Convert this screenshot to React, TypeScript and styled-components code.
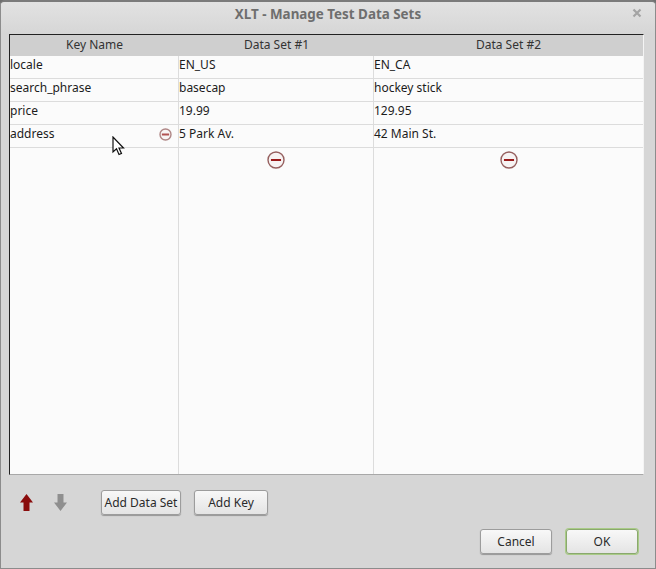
import React from 'react'
import styled, { createGlobalStyle } from 'styled-components'

const GlobalStyle = createGlobalStyle`
  html, body {
    margin: 0;
    padding: 0;
    background: #6f6f6f;
  }
  body {
    font-family: "Noto Sans", "Open Sans", sans-serif;
    font-size: 12px;
  }
`

const Window = styled.div`
  width: 656px;
  height: 569px;
  box-sizing: border-box;
  display: flex;
  flex-direction: column;
  background: #d6d6d6;
  border: 1px solid #8c8c8c;
  border-top: 2px solid #7b7b7b;
  border-radius: 5px 5px 0 0;
  position: relative;
  overflow: hidden;
`

const TitleBar = styled.div`
  height: 32px;
  flex: none;
  position: relative;
  display: flex;
  justify-content: center;
  box-sizing: border-box;
  padding-top: 3px;
  background: linear-gradient(#e2e2e2, #d6d6d6);
`

const Title = styled.div`
  font-size: 13.4px;
  line-height: 19px;
  font-weight: 700;
  color: #6e6e6e;
`

const CloseButton = styled.svg`
  position: absolute;
  right: 13px;
  top: 6px;
`

const Table = styled.div`
  margin: 0 11px 0 8px;
  height: 441px;
  flex: none;
  box-sizing: border-box;
  border-top: 1px solid #222;
  border-left: 1px solid #222;
  border-right: 1px solid #f4f4f4;
  border-bottom: 1px solid #a8a8a8;
  display: grid;
  grid-template-columns: 169px 195px 1fr;
  grid-template-rows: 21px repeat(4, 23px) 1fr;
  background: #fbfbfb;
  color: #222;
`

const HeaderCell = styled.div`
  background: #cfcfcf;
  display: flex;
  align-items: center;
  justify-content: center;
  padding-bottom: 3px;
  color: #333;
`

const Cell = styled.div<{ $last?: boolean }>`
  box-sizing: border-box;
  border-bottom: 1px solid #dcdcdc;
  border-right: ${({ $last }) => ($last ? 'none' : '1px solid #dcdcdc')};
  display: flex;
  align-items: center;
  justify-content: space-between;
  padding: 0 6px 6px 0;
  color: #1c1c1c;
  white-space: nowrap;
`

const ActionCell = styled.div<{ $last?: boolean }>`
  box-sizing: border-box;
  border-right: ${({ $last }) => ($last ? 'none' : '1px solid #dcdcdc')};
  display: flex;
  justify-content: center;
  padding-top: 3px;
`

const Toolbar = styled.div`
  flex: none;
  display: flex;
  align-items: center;
  padding: 15px 0 0 18px;
`

const ArrowSlot = styled.svg<{ $gap: number }>`
  margin-right: ${({ $gap }) => $gap}px;
`

const Button = styled.button<{ $width: number; $focused?: boolean }>`
  width: ${({ $width }) => $width}px;
  height: 25px;
  box-sizing: border-box;
  padding: 0;
  font: inherit;
  color: #2a2a2a;
  background: linear-gradient(#f8f8f8, #e4e4e4);
  border: 1px solid ${({ $focused }) => ($focused ? '#8aa86e' : '#9c9c9c')};
  border-radius: 3px;
  box-shadow: ${({ $focused }) =>
    $focused ? '0 0 0 1px #a9cb87' : '0 1px 1px rgba(0, 0, 0, 0.3)'};
`

const Footer = styled.div`
  flex: none;
  display: flex;
  justify-content: flex-end;
  gap: 14px;
  padding: 14px 17px 0 0;
`

const ToolbarButtons = styled.div`
  display: flex;
  gap: 13px;
`

const Pointer = styled.svg`
  position: absolute;
  left: 111px;
  top: 134px;
`

const RemoveSvg = styled.svg<{ $faded?: boolean }>`
  opacity: ${({ $faded }) => ($faded ? 0.75 : 1)};
  margin-top: ${({ $faded }) => ($faded ? '2px' : '0')};
`

function RemoveIcon({ size, faded }: { size: number; faded?: boolean }) {
  const c = size / 2
  return (
    <RemoveSvg $faded={faded} width={size} height={size} viewBox={`0 0 ${size} ${size}`}>
      <circle cx={c} cy={c} r={c - 1} fill="#f7f3f3" stroke="#96605f" strokeWidth="1.4" />
      <rect x={c - size * 0.28} y={c - 1} width={size * 0.56} height="2" fill="#9a1a1a" />
    </RemoveSvg>
  )
}

const rows = [
  ['locale', 'EN_US', 'EN_CA'],
  ['search_phrase', 'basecap', 'hockey stick'],
  ['price', '19.99', '129.95'],
  ['address', '5 Park Av.', '42 Main St.'],
]

function App() {
  return (
    <>
      <GlobalStyle />
      <Window>
        <TitleBar>
          <Title>XLT - Manage Test Data Sets</Title>
          <CloseButton width="10" height="10" viewBox="0 0 10 10">
            <path d="M1.5 1.5l7 7M8.5 1.5l-7 7" stroke="#a4a4a4" strokeWidth="2.2" />
          </CloseButton>
        </TitleBar>
        <Table>
          <HeaderCell>Key Name</HeaderCell>
          <HeaderCell>Data Set #1</HeaderCell>
          <HeaderCell>Data Set #2</HeaderCell>
          {rows.map(([key, first, second]) => (
            <React.Fragment key={key}>
              <Cell>
                {key}
                {key === 'address' && <RemoveIcon size={13} faded />}
              </Cell>
              <Cell>{first}</Cell>
              <Cell $last>{second}</Cell>
            </React.Fragment>
          ))}
          <ActionCell />
          <ActionCell>
            <RemoveIcon size={18} />
          </ActionCell>
          <ActionCell $last>
            <RemoveIcon size={18} />
          </ActionCell>
        </Table>
        <Toolbar>
          <ArrowSlot $gap={19} width="15" height="19" viewBox="0 0 15 19">
            <path d="M7.5 1L14 9.5H10.5V18H4.5V9.5H1z" fill="#8a0c0c" />
          </ArrowSlot>
          <ArrowSlot $gap={33} width="15" height="19" viewBox="0 0 15 19">
            <path d="M7.5 18L14 9.5H10.5V1H4.5V9.5H1z" fill="#8f8f8f" />
          </ArrowSlot>
          <ToolbarButtons>
            <Button $width={80}>Add Data Set</Button>
            <Button $width={74}>Add Key</Button>
          </ToolbarButtons>
        </Toolbar>
        <Footer>
          <Button $width={72}>Cancel</Button>
          <Button $width={72} $focused>
            OK
          </Button>
        </Footer>
        <Pointer width="13" height="20" viewBox="0 0 13 20">
          <path d="M1 1V16L4.5 12.8L7 18.5L9.5 17.4L7 12H11.5z" fill="#fff" stroke="#111" strokeWidth="1.2" />
        </Pointer>
      </Window>
    </>
  )
}

export default App
